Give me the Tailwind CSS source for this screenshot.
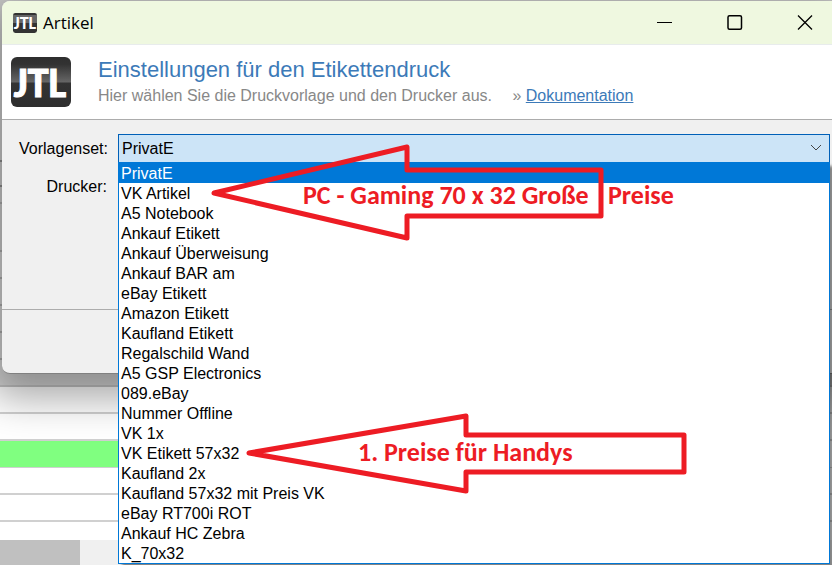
<!DOCTYPE html>
<html lang="de">
<head>
    <meta charset="UTF-8">
    <meta name="viewport" content="width=device-width, initial-scale=1">
    <title>Artikel</title>
    <script src="https://cdn.jsdelivr.net/npm/@tailwindcss/browser@4"></script>
</head>
<body class="relative min-h-screen overflow-hidden bg-white font-['Liberation_Sans',Arial,sans-serif] text-base text-black">

    <!-- Hauptfenster im Hintergrund -->
    <div class="flex min-h-screen flex-col" aria-hidden="true">
        <div class="h-[162px] border-b-2 border-[#909090] bg-[#d0d0d0]"></div>
        <div class="h-[25px] border-b-2 border-[#909090] bg-[#d0d0d0]"></div>
        <div class="h-[17px] border-b-2 border-[#b0b0b0] bg-[#d0d0d0]"></div>
        <div class="h-[48px] border-b-2 border-[#b0b0b0] bg-[#d0d0d0]"></div>
        <div class="h-[27px] border-b-2 border-[#b0b0b0] bg-[#d8d8d8]"></div>
        <div class="h-[27px] border-b-2 border-[#b0b0b0] bg-[#d8d8d8]"></div>
        <div class="h-[27px] border-b-2 border-[#b0b0b0] bg-[#d8d8d8]"></div>
        <div class="h-[27px] border-b-2 border-[#b0b0b0] bg-[#d8d8d8]"></div>
        <div class="h-[27px] border-b-2 border-[#c4c4c4] bg-[#d8d8d8]"></div>
        <div class="h-[27px] border-b-2 border-[#d0d0d0]"></div>
        <div class="h-[27px] border-b-2 border-[#d0d0d0]"></div>
        <div class="h-[27px] border-b border-[#d0d0d0]">
            <div class="h-full w-1/2 bg-[#80ff80]"></div>
        </div>
        <div class="h-[27px] border-b-2 border-[#d0d0d0]"></div>
        <div class="h-[27px] border-b-2 border-[#d0d0d0]"></div>
        <div class="h-[18px]"></div>
        <div class="flex grow bg-[#f0f0f0]">
            <div class="w-20 bg-[#c0c0c0]"></div>
        </div>
    </div>

    <!-- Dialog -->
    <main class="absolute top-px right-0 left-[2px] rounded-l-lg border-b border-[#808080] bg-[#f0f0f0] shadow-[0_12px_40px_12px_rgba(0,0,0,0.35)]">
        <div class="flex h-11 items-center rounded-tl-lg border-b border-[#e8ecec] bg-[#eff8e0] pl-[11px]">
            <svg class="h-5 w-6" viewBox="0 0 60 50" aria-hidden="true">
                <rect width="60" height="50" rx="6" fill="#333"/>
                <rect y="5" width="60" height="20" fill="#666"/>
                <text x="30" y="41" text-anchor="middle" font-family="Impact, Noto Sans ExtraCondensed, Noto Sans Condensed, Carlito, Roboto, sans-serif" font-weight="700" font-size="45" fill="#fff">JTL</text>
            </svg>
            <h1 class="ml-[6px] grow font-['Open_Sans',sans-serif] text-[17px]">Artikel</h1>
            <div class="-mr-2 flex">
                <button type="button" aria-label="Minimieren" class="flex h-10 w-[70px] items-center justify-center">
                    <svg class="size-4" viewBox="0 0 16 16" fill="none" stroke="#000"><path d="M0 7.500H15"/></svg>
                </button>
                <button type="button" aria-label="Maximieren" class="flex h-10 w-[70px] items-center justify-center">
                    <svg class="size-4" viewBox="0 0 16 16" fill="none" stroke="#000" stroke-width="1.500"><rect x="1" y="0.750" width="13.500" height="13.500" rx="1.500"/></svg>
                </button>
                <button type="button" aria-label="Schließen" class="flex h-10 w-[70px] items-center justify-center">
                    <svg class="size-4" viewBox="0 0 16 16" fill="none" stroke="#000" stroke-width="1.300"><path d="M1 0.500L15 14.500M15 0.500L1 14.500"/></svg>
                </button>
            </div>
        </div>

        <header class="flex h-[75px] items-center border-b border-[#acacac] bg-white pl-[9px]">
            <svg class="h-[50px] w-[60px]" viewBox="0 0 60 50" role="img" aria-label="JTL">
                <defs>
                    <linearGradient id="glanz" x1="0" y1="0" x2="0" y2="1">
                        <stop offset="0" stop-color="#2e2e2e"/>
                        <stop offset="0.150" stop-color="#333"/>
                        <stop offset="0.500" stop-color="#666"/>
                        <stop offset="0.520" stop-color="#333"/>
                        <stop offset="1" stop-color="#2e2e2e"/>
                    </linearGradient>
                </defs>
                <rect width="60" height="50" rx="6" fill="url(#glanz)"/>
                <text x="29" y="40" text-anchor="middle" font-family="Impact, Noto Sans ExtraCondensed, Noto Sans Condensed, Carlito, Roboto, sans-serif" font-weight="700" font-size="42" fill="#fff" stroke="#fff">JTL</text>
            </svg>
            <div class="ml-[27px]">
                <h2 class="text-[22px] leading-7 text-[#3c7ab8]">Einstellungen für den Etikettendruck</h2>
                <p class="leading-6 text-[#888]">Hier wählen Sie die Druckvorlage und den Drucker aus. <span class="ml-4">»</span> <a href="#" class="text-[#3c7ab8] underline">Dokumentation</a></p>
            </div>
        </header>

        <form class="h-[190px] border-b border-[#acacac] pt-[14px] pr-[2px]">
            <div class="flex items-center">
                <label for="vorlagenset" class="w-[116px] pr-[10px] text-right">Vorlagenset:</label>
                <div class="relative grow">
                    <select id="vorlagenset" class="block h-[29px] w-full appearance-none border border-[#0060b8] bg-[#cce4f7] px-[3px] outline-none">
                        <option>PrivatE</option>
                    </select>
                    <svg class="absolute top-[10px] right-2 h-2 w-3" viewBox="0 0 12 8" fill="none" stroke="#444"><path d="M1 1L6 6L11 1"/></svg>

                    <ul role="listbox" aria-label="Vorlagenset" class="absolute top-[28px] right-0 left-0 z-10 border border-[#0078d7] bg-white leading-[22px] shadow-[4px_4px_3px_rgba(0,0,0,0.45)]">
                        <li role="option" aria-selected="true" class="h-5 bg-[#0078d7] px-[2px] text-white">PrivatE</li>
                        <li role="option" class="h-5 px-[2px]">VK Artikel</li>
                        <li role="option" class="h-5 px-[2px]">A5 Notebook</li>
                        <li role="option" class="h-5 px-[2px]">Ankauf Etikett</li>
                        <li role="option" class="h-5 px-[2px]">Ankauf Überweisung</li>
                        <li role="option" class="h-5 px-[2px]">Ankauf BAR am</li>
                        <li role="option" class="h-5 px-[2px]">eBay Etikett</li>
                        <li role="option" class="h-5 px-[2px]">Amazon Etikett</li>
                        <li role="option" class="h-5 px-[2px]">Kaufland Etikett</li>
                        <li role="option" class="h-5 px-[2px]">Regalschild Wand</li>
                        <li role="option" class="h-5 px-[2px]">A5 GSP Electronics</li>
                        <li role="option" class="h-5 px-[2px]">089.eBay</li>
                        <li role="option" class="h-5 px-[2px]">Nummer Offline</li>
                        <li role="option" class="h-5 px-[2px]">VK 1x</li>
                        <li role="option" class="h-5 px-[2px]">VK Etikett 57x32</li>
                        <li role="option" class="h-5 px-[2px]">Kaufland 2x</li>
                        <li role="option" class="h-5 px-[2px]">Kaufland 57x32 mit Preis VK</li>
                        <li role="option" class="h-5 px-[2px]">eBay RT700i ROT</li>
                        <li role="option" class="h-5 px-[2px]">Ankauf HC Zebra</li>
                        <li role="option" class="h-5 px-[2px]">K_70x32</li>
                    </ul>
                </div>
            </div>
            <div class="mt-3 w-[116px] pr-[11px] text-right">Drucker:</div>
        </form>
        <div class="h-[63px]"></div>
    </main>

    <!-- Markierungen -->
    <svg class="pointer-events-none absolute top-0 left-0 z-20 h-[565px] w-[832px]" viewBox="0 0 832 565" fill="none" stroke="#ed1c24" stroke-width="5" stroke-linejoin="round">
        <path d="M214 193L407 147V170H601V216H407V238Z"/>
        <path d="M249 453L466 416V435H684V472H466V491Z"/>
        <g fill="#ed1c24" stroke="none" font-family="Carlito, Calibri, Lato" font-weight="700" font-size="26">
            <text x="303" y="204">PC - Gaming 70 x 32 Große</text>
            <text x="608" y="204">Preise</text>
            <text x="358" y="461">1. Preise für Handys</text>
        </g>
    </svg>
</body>
</html>
